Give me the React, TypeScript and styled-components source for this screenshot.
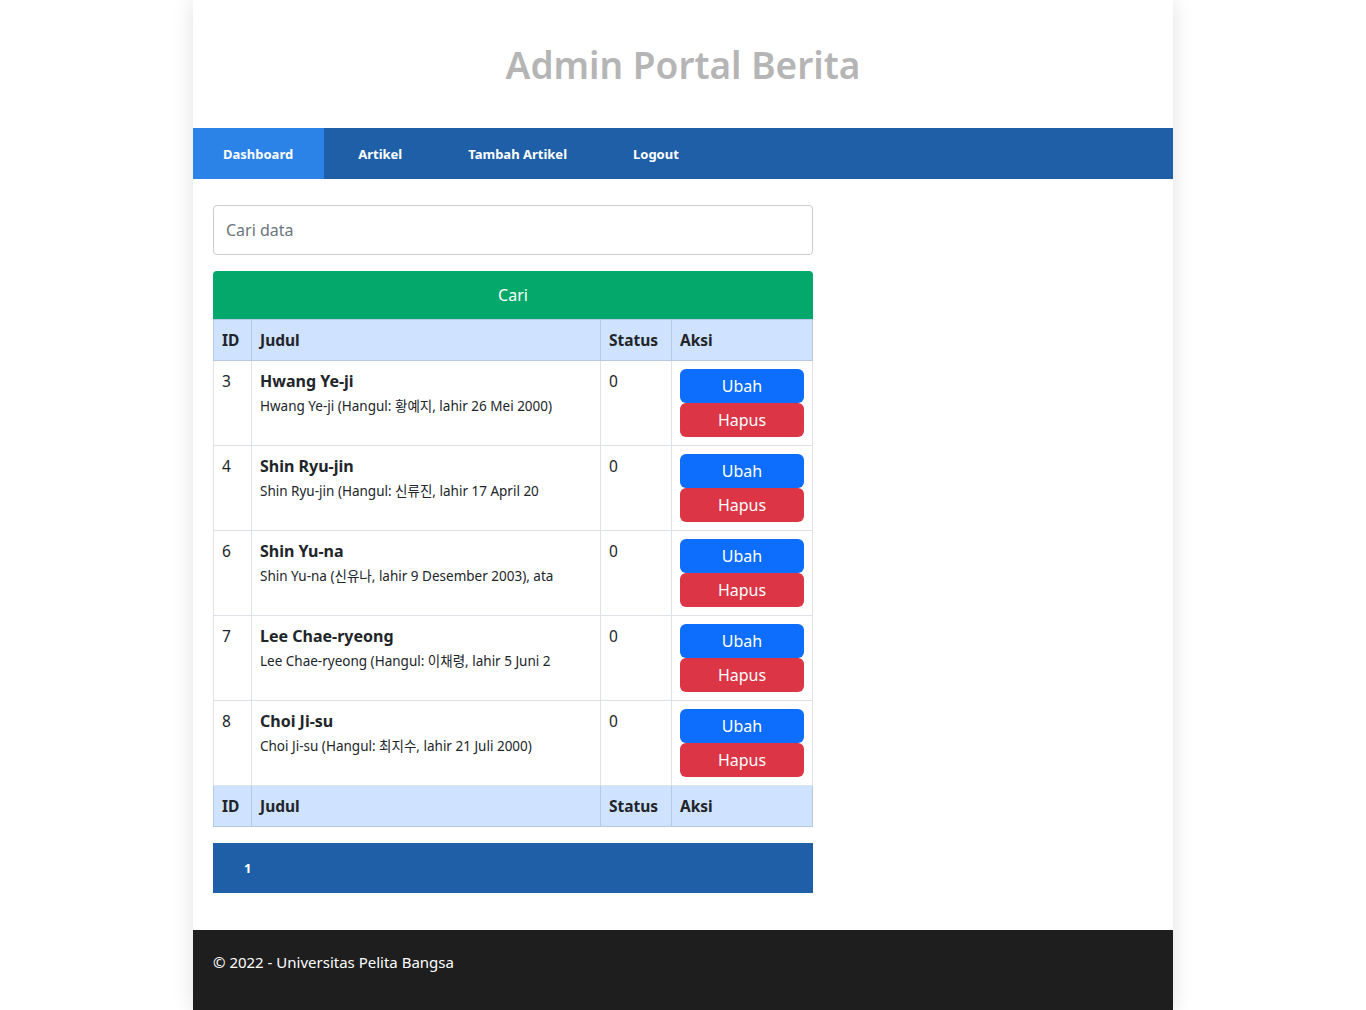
import React from "react";
import styled, { createGlobalStyle } from "styled-components";

const Global = createGlobalStyle`
  html, body { margin: 0; padding: 0; background: #fff; }
  body {
    font-family: "Noto Sans", "Noto Sans CJK KR", sans-serif;
    color: #212529;
    font-size: 16px;
  }
  * { box-sizing: border-box; }
`;

const Container = styled.div`
  width: 980px;
  margin: 0 auto;
  background: #fff;
  box-shadow: 0 0 20px rgba(0, 0, 0, 0.12);
`;

const Header = styled.header`
  height: 128px;
  display: flex;
  align-items: center;
  justify-content: center;
`;

const Title = styled.h1`
  margin: 0;
  font-size: 37px;
  font-weight: 600;
  color: #b5b5b5;
  letter-spacing: 0;
`;

const Nav = styled.nav`
  height: 51px;
  background: #1f5fa8;
  display: flex;
`;

const NavLink = styled.a<{ $active?: boolean }>`
  display: flex;
  align-items: center;
  padding: 0 31px 0 30px;
  font-size: 13px;
  font-weight: 700;
  color: #fff;
  text-decoration: none;
  background: ${(p) => (p.$active ? "#2b83e8" : "transparent")};
  & + & { padding: 0 32px 0 34px; }
`;

const Main = styled.main`
  padding: 26px 20px 37px;
  width: 640px;
`;

const SearchInput = styled.input`
  display: block;
  width: 100%;
  height: 50px;
  border: 1px solid #ccc;
  border-radius: 4px;
  padding: 0 12px;
  font-family: inherit;
  font-size: 16px;
  color: #212529;
  &::placeholder { color: #6c757d; }
`;

const SearchButton = styled.button`
  display: block;
  width: 100%;
  height: 48px;
  margin-top: 16px;
  border: none;
  border-radius: 4px 4px 0 0;
  background: #05a86b;
  color: #fff;
  font-family: inherit;
  font-size: 16px;
`;

const Table = styled.table`
  width: 100%;
  border-collapse: collapse;
  font-size: 16px;
`;

const Th = styled.th<{ $w?: number }>`
  text-align: left;
  font-weight: 700;
  font-size: 15.5px;
  background: #cfe2ff;
  border: 1px solid #b6c8e6;
  padding: 0 8px;
  height: 41px;
  ${(p) => (p.$w ? `width: ${p.$w}px;` : "")}
`;

const Td = styled.td`
  vertical-align: top;
  border: 1px solid #dee2e6;
  padding: 8px;
  height: 85px;
  line-height: 24px;
  font-size: 15.5px;
`;

const ItemTitle = styled.div`
  font-weight: 700;
  font-size: 16px;
  line-height: 24px;
`;

const ItemDesc = styled.div`
  font-size: 13.5px;
  line-height: 21px;
  margin-top: 3px;
`;

const ActionButton = styled.button<{ $variant: "blue" | "red" }>`
  display: block;
  width: 100%;
  height: 34px;
  border: none;
  border-radius: 6px;
  background: ${(p) => (p.$variant === "blue" ? "#0d6efd" : "#dc3545")};
  color: #fff;
  font-family: inherit;
  font-size: 16px;
`;

const Pagination = styled.div`
  margin-top: 16px;
  height: 50px;
  background: #1f5fa8;
  display: flex;
  align-items: center;
`;

const PageLink = styled.a`
  padding: 0 31px;
  font-size: 13px;
  font-weight: 700;
  color: #fff;
`;

const Footer = styled.footer`
  background: #1e1e1e;
  color: #fff;
  height: 80px;
  padding: 20px 20px;
  font-size: 15px;
  line-height: 24px;
`;

const rows = [
  { id: 3, title: "Hwang Ye-ji", desc: "Hwang Ye-ji (Hangul: 황예지, lahir 26 Mei 2000)" },
  { id: 4, title: "Shin Ryu-jin", desc: "Shin Ryu-jin (Hangul: 신류진, lahir 17 April 20" },
  { id: 6, title: "Shin Yu-na", desc: "Shin Yu-na (신유나, lahir 9 Desember 2003), ata" },
  { id: 7, title: "Lee Chae-ryeong", desc: "Lee Chae-ryeong (Hangul: 이채령, lahir 5 Juni 2" },
  { id: 8, title: "Choi Ji-su", desc: "Choi Ji-su (Hangul: 최지수, lahir 21 Juli 2000)" },
];

const HeadRow = () => (
  <tr>
    <Th $w={38}>ID</Th>
    <Th>Judul</Th>
    <Th $w={71}>Status</Th>
    <Th $w={141}>Aksi</Th>
  </tr>
);

export default function App() {
  return (
    <>
      <Global />
      <Container>
        <Header>
          <Title>Admin Portal Berita</Title>
        </Header>
        <Nav>
          <NavLink $active>Dashboard</NavLink>
          <NavLink>Artikel</NavLink>
          <NavLink>Tambah Artikel</NavLink>
          <NavLink>Logout</NavLink>
        </Nav>
        <Main>
          <SearchInput placeholder="Cari data" />
          <SearchButton>Cari</SearchButton>
          <Table>
            <thead>
              <HeadRow />
            </thead>
            <tbody>
              {rows.map((r) => (
                <tr key={r.id}>
                  <Td>{r.id}</Td>
                  <Td>
                    <ItemTitle>{r.title}</ItemTitle>
                    <ItemDesc>{r.desc}</ItemDesc>
                  </Td>
                  <Td>0</Td>
                  <Td>
                    <ActionButton $variant="blue">Ubah</ActionButton>
                    <ActionButton $variant="red">Hapus</ActionButton>
                  </Td>
                </tr>
              ))}
            </tbody>
            <tfoot>
              <HeadRow />
            </tfoot>
          </Table>
          <Pagination>
            <PageLink>1</PageLink>
          </Pagination>
        </Main>
        <Footer>© 2022 - Universitas Pelita Bangsa</Footer>
      </Container>
    </>
  );
}
